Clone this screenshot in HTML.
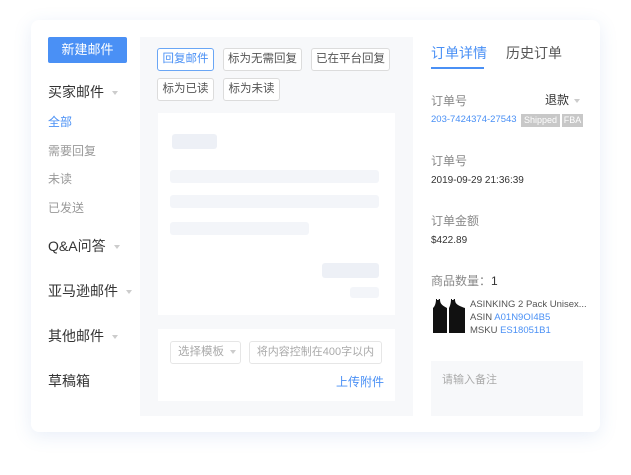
<!DOCTYPE html>
<html><head><meta charset="utf-8"><style>
*{margin:0;padding:0;box-sizing:border-box}
body{width:631px;height:475px;background:#fff;font-family:"Liberation Sans","Noto Sans CJK SC",sans-serif;position:relative;overflow:hidden}
.a{position:absolute;white-space:nowrap}
.card{position:absolute;left:31px;top:20px;width:569px;height:412px;background:#fff;border-radius:8px;box-shadow:0 4px 18px rgba(80,120,200,.13)}
.btn{position:absolute;height:23px;border:1px solid #dcdcdc;border-radius:3px;background:#fff;font-size:11.5px;color:#555;text-align:center;line-height:21px}
.nav{position:absolute;left:48px;font-size:12px;color:#999}
.big{position:absolute;left:48px;font-size:14px;color:#333}
.car{display:inline-block;width:0;height:0;border-left:3px solid transparent;border-right:3px solid transparent;border-top:4px solid #ccc;margin-left:8px;vertical-align:middle}
.ph{position:absolute;background:#f3f5f9;border-radius:3px}
.lab{position:absolute;left:431px;font-size:12px;color:#888}
.val{position:absolute;left:431px;font-size:10px;color:#333}
</style></head><body>
<div class="card"></div>
<div class="a" style="left:48px;top:37px;width:79px;height:26px;background:#4a90f5;border-radius:2px;color:#fff;font-size:13px;text-align:center;line-height:26px">新建邮件</div>
<div class="big" style="top:82px">买家邮件<span class="car"></span></div>
<div class="nav" style="top:113px;color:#4a90f5">全部</div>
<div class="nav" style="top:142px">需要回复</div>
<div class="nav" style="top:170px">未读</div>
<div class="nav" style="top:199px">已发送</div>
<div class="big" style="top:236px">Q&amp;A问答<span class="car"></span></div>
<div class="big" style="top:281px">亚马逊邮件<span class="car"></span></div>
<div class="big" style="top:326px">其他邮件<span class="car"></span></div>
<div class="big" style="top:371px">草稿箱</div>

<div class="a" style="left:140px;top:37px;width:273px;height:379px;background:#f7f8fa"></div>
<div class="btn" style="left:157px;top:48px;width:57px;border-color:#6aa6f5;color:#4a90f5">回复邮件</div>
<div class="btn" style="left:223px;top:48px;width:79px">标为无需回复</div>
<div class="btn" style="left:311px;top:48px;width:79px">已在平台回复</div>
<div class="btn" style="left:157px;top:78px;width:57px">标为已读</div>
<div class="btn" style="left:223px;top:78px;width:57px">标为未读</div>
<div class="a" style="left:158px;top:113px;width:237px;height:202px;background:#fff"></div>
<div class="ph" style="left:172px;top:134px;width:45px;height:15px;background:#edf0f6"></div>
<div class="ph" style="left:170px;top:170px;width:209px;height:13px"></div>
<div class="ph" style="left:170px;top:195px;width:209px;height:13px"></div>
<div class="ph" style="left:170px;top:222px;width:139px;height:13px"></div>
<div class="ph" style="left:322px;top:263px;width:57px;height:15px;background:#edf0f6"></div>
<div class="ph" style="left:350px;top:287px;width:29px;height:11px"></div>
<div class="a" style="left:158px;top:329px;width:237px;height:72px;background:#fff"></div>
<div class="btn" style="left:170px;top:341px;width:71px;color:#aaa;border-color:#e6e6e6;text-align:left;padding-left:7px">选择模板<span class="car" style="margin-left:6px"></span></div>
<div class="btn" style="left:249px;top:341px;width:133px;color:#aaa;border-color:#e6e6e6;font-size:11px">将内容控制在400字以内</div>
<div class="a" style="left:336px;top:373px;font-size:12px;color:#4a90f5">上传附件</div>

<div class="a" style="left:431px;top:43px;font-size:14px;color:#4a90f5">订单详情</div>
<div class="a" style="left:431px;top:67px;width:53px;height:2px;background:#4a90f5"></div>
<div class="a" style="left:506px;top:43px;font-size:14px;color:#555">历史订单</div>
<div class="lab" style="top:92px">订单号</div>
<div class="a" style="left:545px;top:91px;font-size:12px;color:#333">退款<span class="car" style="margin-left:5px"></span></div>
<div class="a" style="left:431px;top:114px;font-size:9.5px;color:#4a90f5">203-7424374-27543</div>
<div class="a" style="left:521px;top:114px;width:39px;height:13px;background:#c8c8c8;color:#fff;font-size:9px;text-align:center;line-height:13px">Shipped</div>
<div class="a" style="left:562px;top:114px;width:21px;height:13px;background:#c8c8c8;color:#fff;font-size:9px;text-align:center;line-height:13px">FBA</div>
<div class="lab" style="top:152px">订单号</div>
<div class="val" style="top:175px">2019-09-29 21:36:39</div>
<div class="lab" style="top:212px">订单金额</div>
<div class="val" style="top:235px">$422.89</div>
<div class="lab" style="top:272px">商品数量：<span style="color:#333">1</span></div>
<svg class="a" style="left:432px;top:298px" width="34" height="36" viewBox="0 0 34 36"><path d="M4 1h1v1c1 0 2 0 2-1h1c0 4 1 6 7 9v25H1V10c2-2 3-5 3-9z" fill="#111"/><path d="M19 1h1v1c1 0 2 0 2-1h1c0 4 1 6 10 9v25H17V10c1-2 2-5 2-9z" fill="#111"/></svg>
<div class="a" style="left:470px;top:299px;font-size:9.5px;color:#555">ASINKING 2 Pack Unisex...</div>
<div class="a" style="left:470px;top:312px;font-size:9.5px;color:#555">ASIN <span style="color:#4a90f5">A01N9OI4B5</span></div>
<div class="a" style="left:470px;top:325px;font-size:9.5px;color:#555">MSKU <span style="color:#4a90f5">ES18051B1</span></div>
<div class="a" style="left:431px;top:361px;width:152px;height:55px;background:#f7f8fa"></div>
<div class="a" style="left:442px;top:371px;font-size:11px;color:#aaa">请输入备注</div>
</body></html>
